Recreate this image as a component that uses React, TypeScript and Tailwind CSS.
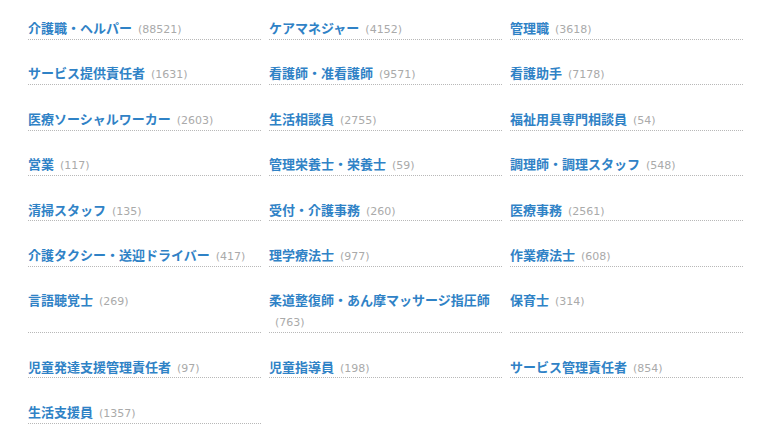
import React from 'react';

type Job = { name: string; count: number };

const jobs: Job[] = [
    { name: '介護職・ヘルパー', count: 88521 },
    { name: 'ケアマネジャー', count: 4152 },
    { name: '管理職', count: 3618 },
    { name: 'サービス提供責任者', count: 1631 },
    { name: '看護師・准看護師', count: 9571 },
    { name: '看護助手', count: 7178 },
    { name: '医療ソーシャルワーカー', count: 2603 },
    { name: '生活相談員', count: 2755 },
    { name: '福祉用具専門相談員', count: 54 },
    { name: '営業', count: 117 },
    { name: '管理栄養士・栄養士', count: 59 },
    { name: '調理師・調理スタッフ', count: 548 },
    { name: '清掃スタッフ', count: 135 },
    { name: '受付・介護事務', count: 260 },
    { name: '医療事務', count: 2561 },
    { name: '介護タクシー・送迎ドライバー', count: 417 },
    { name: '理学療法士', count: 977 },
    { name: '作業療法士', count: 608 },
    { name: '言語聴覚士', count: 269 },
    { name: '柔道整復師・あん摩マッサージ指圧師', count: 763 },
    { name: '保育士', count: 314 },
    { name: '児童発達支援管理責任者', count: 97 },
    { name: '児童指導員', count: 198 },
    { name: 'サービス管理責任者', count: 854 },
    { name: '生活支援員', count: 1357 },
];

const JobItem: React.FC<{ job: Job }> = ({ job }) => (
    <li className="border-b border-dotted border-[#b8b8b8] text-[13px] leading-[20.8px] font-['Noto_Sans_CJK_JP',sans-serif]">
        <a href="#" className="font-bold text-[#2f82c6]">{job.name}</a>
        <span className="inline-block ml-[6px] text-[11px] leading-none text-[#aaaaaa] font-['DejaVu_Sans',sans-serif]">({job.count})</span>
    </li>
);

export default function App() {
    return (
        <div className="bg-white w-[758px] h-[438px] overflow-hidden">
            <ul className="grid grid-cols-3 gap-x-[8px] gap-y-[23.6px] pl-[28px] pt-[18px] w-[743px]">
                {jobs.map((job) => (
                    <JobItem key={job.name} job={job} />
                ))}
            </ul>
        </div>
    );
}
